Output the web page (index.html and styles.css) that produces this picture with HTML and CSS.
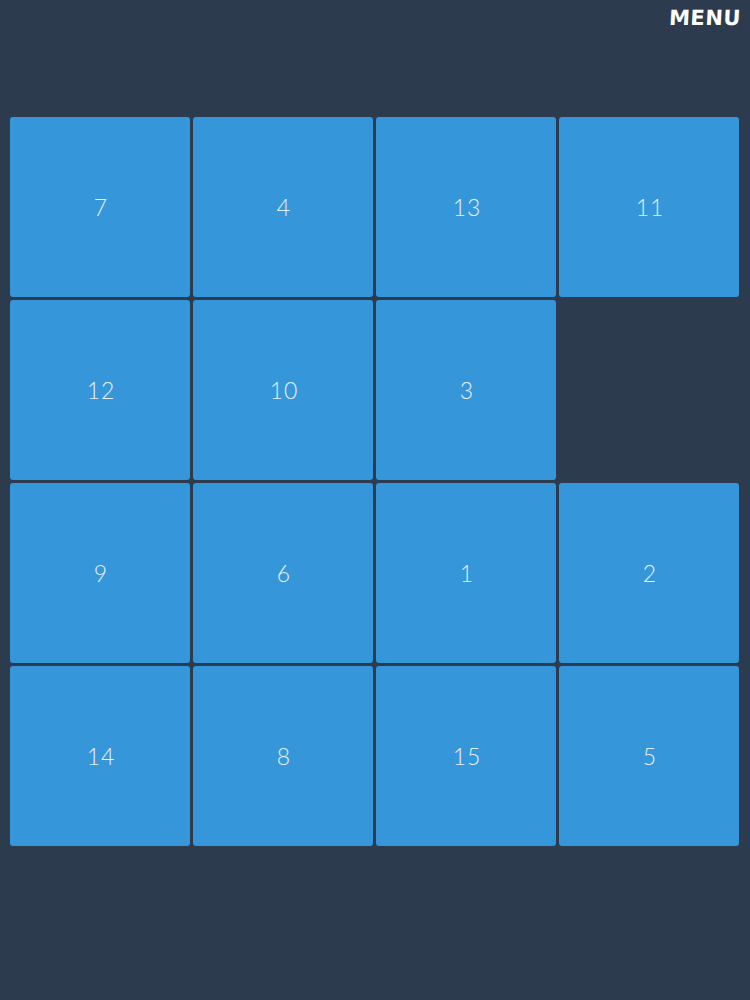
FILE: index.html
```html
<!DOCTYPE html>
<html>
<head>
<meta charset="utf-8">
<link rel="stylesheet" href="styles.css">
</head>
<body>
<div class="page">
  <header class="top">
    <span class="menu">MENU</span>
  </header>
  <main class="board">
    <div class="tile">7</div>
    <div class="tile">4</div>
    <div class="tile">13</div>
    <div class="tile">11</div>
    <div class="tile">12</div>
    <div class="tile">10</div>
    <div class="tile">3</div>
    <div class="empty"></div>
    <div class="tile">9</div>
    <div class="tile">6</div>
    <div class="tile">1</div>
    <div class="tile">2</div>
    <div class="tile">14</div>
    <div class="tile">8</div>
    <div class="tile">15</div>
    <div class="tile">5</div>
  </main>
</div>
</body>
</html>
```
FILE: styles.css
```css
html, body {
  margin: 0;
  padding: 0;
  background: #2d3b4f;
}
.page {
  width: 750px;
  height: 1000px;
  background: #2d3b4f;
}
.top {
  height: 117px;
  display: flex;
  justify-content: flex-end;
  align-items: flex-start;
}
.menu {
  margin-top: 6px;
  margin-right: 9px;
  font-family: "DejaVu Sans", sans-serif;
  font-size: 21px;
  font-weight: 600;
  letter-spacing: 0.5px;
  color: #ffffff;
  transform: skewX(-3deg);
  transform-origin: right center;
}
.board {
  margin-left: 10px;
  display: grid;
  grid-template-columns: repeat(4, 180px);
  grid-auto-rows: 180px;
  gap: 3px;
}
.tile {
  background: #3596d9;
  border-radius: 3px;
  display: flex;
  align-items: center;
  justify-content: center;
  font-family: Lato, "Open Sans", sans-serif;
  font-weight: 300;
  font-size: 23px;
  color: #e6f2fb;
  letter-spacing: 1px;
  padding-left: 2px;
}
```
